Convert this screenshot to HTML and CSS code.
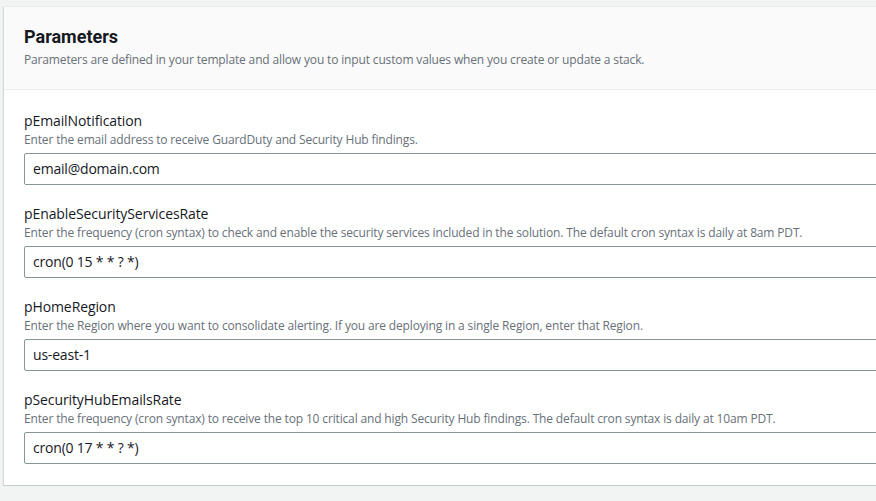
FILE: index.html
```html
<!DOCTYPE html>
<html>
<head>
<meta charset="utf-8">
<link rel="stylesheet" href="styles.css">
</head>
<body>
<div class="card">
  <div class="card-header">
    <h2 class="title">Parameters</h2>
    <p class="desc">Parameters are defined in your template and allow you to input custom values when you create or update a stack.</p>
  </div>
  <div class="card-body">
    <div class="field">
      <div class="label">pEmailNotification</div>
      <div class="hint">Enter the email address to receive GuardDuty and Security Hub findings.</div>
      <div class="input">email@domain.com</div>
    </div>
    <div class="field">
      <div class="label">pEnableSecurityServicesRate</div>
      <div class="hint">Enter the frequency (cron syntax) to check and enable the security services included in the solution. The default cron syntax is daily at 8am PDT.</div>
      <div class="input">cron(0 15 * * ? *)</div>
    </div>
    <div class="field">
      <div class="label">pHomeRegion</div>
      <div class="hint">Enter the Region where you want to consolidate alerting. If you are deploying in a single Region, enter that Region.</div>
      <div class="input">us-east-1</div>
    </div>
    <div class="field">
      <div class="label">pSecurityHubEmailsRate</div>
      <div class="hint">Enter the frequency (cron syntax) to receive the top 10 critical and high Security Hub findings. The default cron syntax is daily at 10am PDT.</div>
      <div class="input">cron(0 17 * * ? *)</div>
    </div>
  </div>
</div>
</body>
</html>
```

FILE: styles.css
```css
html, body {
  margin: 0;
  padding: 0;
  background: #f2f3f3;
  overflow: hidden;
}
body {
  padding: 6px 0 0 3px;
  font-family: "Open Sans", "Noto Sans", sans-serif;
  color: #16191f;
}
.card {
  width: 920px;
  background: #ffffff;
  border-top: 1px solid #eaeded;
  border-left: 1px solid #d5dbdb;
  border-bottom: 1px solid #c6cbcb;
  box-shadow: 0 1px 1px rgba(0, 28, 36, 0.15);
}
.card-header {
  background: #fafafa;
  border-bottom: 1px solid #eaeded;
  padding: 19px 20px 21px 20px;
}
.title {
  margin: 0;
  font-family: Roboto, "Open Sans", sans-serif;
  font-size: 18px;
  line-height: 22px;
  font-weight: 700;
  color: #16191f;
}
.desc {
  margin: 4px 0 0 0;
  font-size: 12px;
  line-height: 16px;
  color: #687078;
  letter-spacing: -0.15px;
}
.card-body {
  padding: 20px 20px 21px 20px;
  display: flex;
  flex-direction: column;
  gap: 18px;
}
.field {
  display: flex;
  flex-direction: column;
}
.label {
  font-size: 14px;
  line-height: 22px;
  letter-spacing: -0.1px;
}
.hint {
  font-size: 12px;
  line-height: 16px;
  color: #687078;
  margin-bottom: 5px;
  letter-spacing: -0.15px;
}
.input {
  border: 1px solid #879596;
  border-radius: 2px;
  height: 30px;
  line-height: 30px;
  padding: 0 8px;
  font-size: 14px;
  letter-spacing: -0.2px;
}
```
